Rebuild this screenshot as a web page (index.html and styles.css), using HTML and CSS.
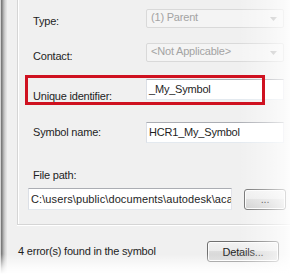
FILE: index.html
```html
<!DOCTYPE html>
<html lang="en">
<head>
    <meta charset="UTF-8">
    <meta name="viewport" content="width=device-width, initial-scale=1.0">
    <title>Symbol Properties</title>
    <link rel="stylesheet" href="styles.css">
</head>
<body>
    <div class="frame">
        <div class="edge"></div>
        <div class="dialog">
            <div class="group">
                <div class="row row-type">
                    <span class="label">Type:</span>
                    <div class="combo disabled">
                        <span>(1) Parent</span>
                        <svg class="arrow" width="7" height="4" viewBox="0 0 7 4"><path d="M0 0h7L3.5 4z"/></svg>
                    </div>
                </div>
                <div class="row row-contact">
                    <span class="label">Contact:</span>
                    <div class="combo disabled">
                        <span>&lt;Not Applicable&gt;</span>
                        <svg class="arrow" width="7" height="4" viewBox="0 0 7 4"><path d="M0 0h7L3.5 4z"/></svg>
                    </div>
                </div>
                <div class="row row-unique">
                    <span class="label">Unique identifier:</span>
                    <div class="field">_My_Symbol</div>
                </div>
                <div class="row row-symbol">
                    <span class="label">Symbol name:</span>
                    <div class="field">HCR1_My_Symbol</div>
                </div>
                <div class="label file-label">File path:</div>
                <div class="row row-file">
                    <div class="field file-field">C:\users\public\documents\autodesk\aca</div>
                    <button class="btn browse">...</button>
                </div>
            </div>
            <div class="footer">
                <span class="errors">4 error(s) found in the symbol</span>
                <button class="btn details">Details...</button>
            </div>
        </div>
    </div>
</body>
</html>
```

FILE: styles.css
```css
:root {
    --dialog-bg: #f0f0f0;
    --text-color: #1e1e1e;
    --disabled-text: #a3a3a3;
    --disabled-border: #d9d9d9;
    --group-line: #d5d5d5;
    --annotation: #cf1120;
}
body {
    margin: 0;
    background: #fff;
    font-family: "Liberation Sans", Arial, sans-serif;
    font-size: 11px;
    letter-spacing: -0.2px;
    color: var(--text-color);
}
.frame {
    position: relative;
    display: flex;
    width: 290px;
    height: 274px;
    overflow: hidden;
}
/* white fade on the right and bottom edges of the crop */
.frame::after {
    content: '';
    position: absolute;
    inset: 0;
    z-index: 1;
    pointer-events: none;
    background:
        linear-gradient(to right, rgba(255,255,255,0) 238px, rgba(255,255,255,.35) 265px, rgba(255,255,255,.7) 284px, rgba(255,255,255,.88) 290px),
        linear-gradient(to bottom, rgba(255,255,255,0) 254px, rgba(255,255,255,.8) 268px, #fff 274px);
}
.edge {
    flex: 0 0 7px;
    background: linear-gradient(to right, #d4d4d4 0, #d4d4d4 1px, #777 1px, #7e7e7e 2px, #a8a8a8 3px, #d2d2d2 5px, #e9e9e9 7px);
}
.dialog {
    flex: 1;
    min-width: 0;
    background: var(--dialog-bg);
}
.group {
    width: 300px;
    margin-left: 10px;
    padding: 9px 0 14px 10px;
    border-left: 1px solid var(--group-line);
    border-bottom: 1px solid var(--group-line);
    box-shadow: inset 1px 0 0 #fff, 0 1px 0 #fff;
}
.row {
    display: flex;
    align-items: flex-start;
}
.label {
    flex: 0 0 113px;
    margin-left: 5px;
    line-height: 13px;
    white-space: nowrap;
}
.row-type .label { margin-top: 6px; }
.row-contact { margin-top: 15px; }
.row-contact .label { margin-top: 7px; }
.row-unique {
    position: relative;
    margin-top: 16px;
}
.row-unique .label { margin-top: 11px; }
.row-symbol { margin-top: 19px; }
.row-symbol .label { margin-top: 4px; }

/* red annotation round the identifier row */
.row-unique::after {
    content: '';
    position: absolute;
    left: -3px;
    top: -4px;
    width: 240px;
    height: 30px;
    box-sizing: border-box;
    border: 3px solid var(--annotation);
    z-index: 2;
}
.combo {
    display: flex;
    justify-content: space-between;
    align-items: center;
    box-sizing: border-box;
    width: 138px;
    height: 19px;
    padding: 0 6px 3px 4px;
    line-height: 14px;
    border: 1px solid var(--disabled-border);
    border-radius: 2px;
    background: #f4f4f4;
}
.combo.disabled { color: var(--disabled-text); }
.combo .arrow {
    margin-top: 3px;
    fill: #b8b8b8;
}
.field {
    box-sizing: border-box;
    width: 138px;
    height: 21px;
    padding: 0 2px 1px;
    line-height: 18px;
    background: #fff;
    border: 1px solid;
    border-color: #abadb3 #e2e3ea #e3e9ef #dbdfe6;
    white-space: nowrap;
    overflow: hidden;
}
.file-label {
    margin-top: 26px;
}
.row-file {
    margin-top: 6px;
    align-items: center;
}
.file-field {
    width: 204px;
    height: 22px;
    padding: 1px 1px 0 2px;
    letter-spacing: 0.1px;
}
.btn {
    box-sizing: border-box;
    padding: 0;
    font-family: inherit;
    font-size: 11px;
    letter-spacing: -0.2px;
    color: var(--text-color);
    border: 1px solid #707070;
    border-radius: 3px;
    background: linear-gradient(#f2f2f2, #ebebeb 50%, #dddddd 50%, #cfcfcf);
    box-shadow: inset 0 0 0 1px #fcfcfc;
}
.browse {
    width: 42px;
    height: 21px;
    margin-left: 12px;
}
.footer {
    display: grid;
    grid-template-columns: 189px 72px;
    margin: 16px 0 0 11px;
}
.errors {
    line-height: 21px;
    white-space: nowrap;
}
.details {
    height: 21px;
}
```
